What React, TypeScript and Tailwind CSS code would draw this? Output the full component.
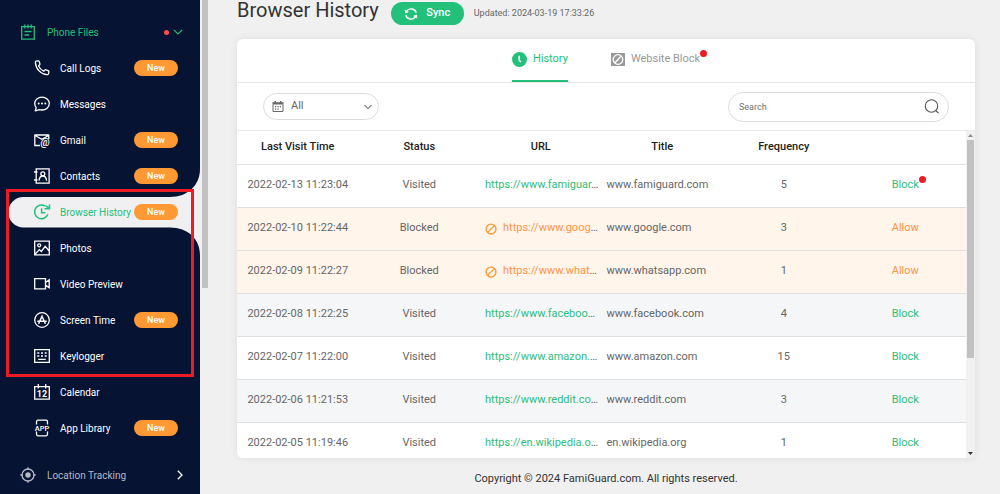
import type { ReactNode } from 'react'

type MenuItem = {
  label: string
  icon: ReactNode
  isNew?: boolean
  active?: boolean
}

function Icon({ children, className = 'w-4 h-4' }: { children: ReactNode; className?: string }) {
  return (
    <svg
      viewBox="0 0 16 16"
      fill="none"
      stroke="currentColor"
      strokeWidth="1.3"
      className={`shrink-0 overflow-visible ${className}`}
      aria-hidden="true"
    >
      {children}
    </svg>
  )
}

const topItems: MenuItem[] = [
  {
    label: 'Call Logs',
    isNew: true,
    icon: (
      <Icon>
        <path
          d="M1.4 2.6C1.2 1.6 2.2.8 3.3.8h.9c.6 0 1 .4 1.1.9l.6 2.2c.1.5 0 .9-.4 1.2l-1 .9c1 2.1 2.8 4 5.2 5.2l1-1.1c.3-.4.8-.5 1.2-.3l2.3.9c.5.2.8.6.7 1.1l-.2 1.4c-.1.9-.9 1.6-1.8 1.5C6.8 14.2 1.9 9 1.4 2.6z"
          strokeLinejoin="round"
        />
      </Icon>
    ),
  },
  {
    label: 'Messages',
    icon: (
      <Icon>
        <path d="M1.3 14.8l.9-3.2A6.3 6.3 0 0 1 .7 7.6C.7 4 4 1.2 8 1.2s7.3 2.8 7.3 6.4S12 14 8 14c-.9 0-1.7-.1-2.5-.4z" strokeLinejoin="round" />
        <g fill="currentColor" stroke="none">
          <circle cx="4.7" cy="7.6" r="1" />
          <circle cx="8" cy="7.6" r="1" />
          <circle cx="11.3" cy="7.6" r="1" />
        </g>
      </Icon>
    ),
  },
  {
    label: 'Gmail',
    isNew: true,
    icon: (
      <Icon>
        <path d="M6 13.500H.8V3.200h14V7M1 3.500l6.800 3.700 6.800-3.700M.8 3h14" />
        <text x="6.4" y="14" fill="currentColor" stroke="none" fontSize="10.5" fontStyle="italic" fontWeight="500" fontFamily="Roboto, sans-serif">@</text>
      </Icon>
    ),
  },
  {
    label: 'Contacts',
    isNew: true,
    icon: (
      <Icon>
        <path d="M2.2.9h12.9v14.2H2.2zM0 4h3.5M0 12h3.5" />
        <circle cx="8.8" cy="5.8" r="2" />
        <path d="M5 12.600c.3-2.800 1.600-4.600 3.800-4.600s3.500 1.800 3.800 4.600" />
      </Icon>
    ),
  },
]

const highlightedItems: MenuItem[] = [
  {
    label: 'Browser History',
    isNew: true,
    active: true,
    icon: (
      <Icon>
        <path d="M13.9 10.3A6.9 6.9 0 1 1 11 1.900M7.600 4.300v4.400h3.800" strokeWidth="1.5" />
        <path d="M10.5 4.800h5V.4M15.400 4.600l-3.900-3" strokeWidth="1.5" />
      </Icon>
    ),
  },
  {
    label: 'Photos',
    icon: (
      <Icon>
        <path d="M.7 1.200h14.600v13.600H.7zM1 14.400l4.300-4.800 2 1.900 3.900-5.200 4 4.700" />
        <circle cx="5.2" cy="5.3" r="1.5" />
      </Icon>
    ),
  },
  {
    label: 'Video Preview',
    icon: (
      <Icon>
        <path d="M.7 2.700h10.800v10.200H.7zM11.500 6.500l3.700-2.700v8l-3.700-2.700" />
      </Icon>
    ),
  },
  {
    label: 'Screen Time',
    isNew: true,
    icon: (
      <Icon>
        <circle cx="8" cy="8" r="7.3" />
        <path d="M4.600 11.800L8 4.300l3.400 7.500M3.300 9.300h9.400" strokeWidth="1.5" />
      </Icon>
    ),
  },
  {
    label: 'Keylogger',
    icon: (
      <Icon>
        <path d="M.7 1.700h14.600v12.600H.7zM4.200 11.400h7.600" />
        <path d="M3.300 5h2M7 5h2M10.700 5h2M3.300 8h2M7 8h2M10.700 8h2" strokeWidth="1.6" />
      </Icon>
    ),
  },
]

const bottomItems: MenuItem[] = [
  {
    label: 'Calendar',
    icon: (
      <Icon>
        <path d="M.7 2.700h14.600v12.500H.7zM4.300 0v4.500M11.700 0v4.500" />
        <text x="8" y="13.200" textAnchor="middle" fill="currentColor" stroke="none" fontSize="9" fontWeight="700" fontFamily="Roboto, sans-serif">12</text>
      </Icon>
    ),
  },
  {
    label: 'App Library',
    isNew: true,
    icon: (
      <Icon>
        <path d="M2.500 4.500V2C2.500 1.200 3 .2 3.800.2h8.400c.8 0 1.300 1 1.300 1.800v2.500M2.500 11.500V14c0 .8.5 1.800 1.300 1.800h8.400c.8 0 1.300-1 1.300-1.800v-2.500" />
        <text x="8" y="10.600" textAnchor="middle" fill="currentColor" stroke="none" fontSize="7.500" fontWeight="500" fontFamily="Roboto, sans-serif">APP</text>
      </Icon>
    ),
  },
]

function MenuRow({ item }: { item: MenuItem }) {
  return (
    <li className="relative h-9">
      {item.active && (
        <svg
          viewBox="0 0 192 86"
          className="absolute -top-[25px] right-0 w-[192px] h-[86px] text-[#f0f0f3]"
          fill="currentColor"
          aria-hidden="true"
        >
          <path d="M15.500 28H162C180 28 192 16 192 0V86C192 70 180 58.500 162 58.500H15.500A15.250 15.250 0 0 1 15.500 28z" />
        </svg>
      )}
      <a
        href="#"
        className={`relative flex items-center h-full pl-[34px] pr-[22px] ${item.active ? 'text-[#22c07a]' : 'text-white'}`}
      >
        {item.icon}
        <span className="ml-[10px] flex-1 whitespace-nowrap">{item.label}</span>
        {item.isNew && (
          <span className="w-11 h-4 rounded-full bg-[#ff9933] text-white text-[9px] leading-4 font-medium text-center">
            New
          </span>
        )}
      </a>
    </li>
  )
}

function Sidebar() {
  return (
    <nav className="w-[200px] shrink-0 bg-[#061333] pt-[14px] text-[10px] overflow-hidden">
      <button type="button" className="flex items-center w-full h-9 pl-5 pr-[17px] text-[#22c07a]">
        <Icon>
          <path d="M1.700 2.700h12.600v12.500H1.700zM4.800.4v4M8 .4v4M11.200.4v4M4.500 7.500h7M4.500 11h4.500" />
        </Icon>
        <span className="ml-[11px] flex-1 text-left">Phone Files</span>
        <span className="w-[5px] h-[5px] rounded-full bg-[#ff4d4f]" />
        <svg viewBox="0 0 10 6" className="ml-1 w-[10px] h-[6px]" fill="none" stroke="currentColor" strokeWidth="1.2" aria-hidden="true">
          <path d="M.8.8L5 5 9.200.8" />
        </svg>
      </button>
      <ul>
        {topItems.map((item) => (
          <MenuRow key={item.label} item={item} />
        ))}
      </ul>
      <div className="relative">
        <ul>
          {highlightedItems.map((item) => (
            <MenuRow key={item.label} item={item} />
          ))}
        </ul>
        <div className="absolute -top-[5px] -bottom-[3px] left-[6px] right-[6px] border-3 border-[#ed1c24] pointer-events-none" />
      </div>
      <ul>
        {bottomItems.map((item) => (
          <MenuRow key={item.label} item={item} />
        ))}
      </ul>
      <button type="button" className="flex items-center w-full h-9 mt-[11px] pl-5 pr-[17px] text-[#b4b9c5]">
        <Icon>
          <circle cx="8" cy="8" r="6" />
          <circle cx="8" cy="8" r="2.7" fill="currentColor" stroke="none" />
          <path d="M8 .3v2.500M8 13.200v2.500M.3 8h2.500M13.200 8h2.500" />
        </Icon>
        <span className="ml-[11px] flex-1 text-left">Location Tracking</span>
        <svg viewBox="0 0 6 10" className="w-[6px] h-[10px] text-white" fill="none" stroke="currentColor" strokeWidth="1.3" aria-hidden="true">
          <path d="M.8.8L5 5 .8 9.200" />
        </svg>
      </button>
    </nav>
  )
}

type Visit = {
  time: string
  url: string
  title: string
  frequency: number
  blocked?: boolean
  marked?: boolean
}

const visits: Visit[] = [
  { time: '2022-02-13 11:23:04', url: 'https://www.famiguar', title: 'www.famiguard.com', frequency: 5, marked: true },
  { time: '2022-02-10 11:22:44', url: 'https://www.goog', title: 'www.google.com', frequency: 3, blocked: true },
  { time: '2022-02-09 11:22:27', url: 'https://www.what', title: 'www.whatsapp.com', frequency: 1, blocked: true },
  { time: '2022-02-08 11:22:25', url: 'https://www.faceboo', title: 'www.facebook.com', frequency: 4 },
  { time: '2022-02-07 11:22:00', url: 'https://www.amazon.', title: 'www.amazon.com', frequency: 15 },
  { time: '2022-02-06 11:21:53', url: 'https://www.reddit.co', title: 'www.reddit.com', frequency: 3 },
  { time: '2022-02-05 11:19:46', url: 'https://en.wikipedia.o', title: 'en.wikipedia.org', frequency: 1 },
]

function rowColor(visit: Visit, index: number) {
  if (visit.blocked) return 'bg-[#fff5eb]'
  return index % 2 === 1 ? 'bg-[#f5f6f8]' : 'bg-white'
}

function HistoryTable() {
  return (
    <table className="w-full table-fixed border-collapse text-[11px] text-[#666]">
      <thead>
        <tr className="h-[33px] border-b border-[#e0e0e0] text-[#222]">
          <th className="font-medium">Last Visit Time</th>
          <th className="font-medium">Status</th>
          <th className="font-medium">URL</th>
          <th className="font-medium">Title</th>
          <th className="font-medium">Frequency</th>
          <th aria-label="Action" />
        </tr>
      </thead>
      <tbody>
        {visits.map((visit, i) => (
          <tr key={visit.time} className={`h-[43px] border-b border-[#e0e0e0] ${rowColor(visit, i)}`}>
            <td className="text-center whitespace-nowrap">{visit.time}</td>
            <td className="text-center">{visit.blocked ? 'Blocked' : 'Visited'}</td>
            <td className="pl-[5px]">
              <div className="flex items-center gap-[6px] whitespace-nowrap">
                {visit.blocked && (
                  <Icon className="w-3 h-3 text-[#ff9933]">
                    <circle cx="8" cy="8" r="6.6" strokeWidth="1.8" />
                    <path d="M3.500 12.500l9-9" strokeWidth="1.8" />
                  </Icon>
                )}
                <span>
                  <a href={`https://${visit.title}`} className={visit.blocked ? 'text-[#ff9345]' : 'text-[#2fbc7c]'}>
                    {visit.url}
                  </a>
                  …
                </span>
              </div>
            </td>
            <td className="pl-[5px]">{visit.title}</td>
            <td className="text-center">{visit.frequency}</td>
            <td className="text-center">
              <button type="button" className={`relative ${visit.blocked ? 'text-[#ff9345]' : 'text-[#2fbc7c]'}`}>
                {visit.blocked ? 'Allow' : 'Block'}
                {visit.marked && <span className="absolute -top-px -right-[7px] w-[7px] h-[7px] rounded-full bg-[#ed1c24]" />}
              </button>
            </td>
          </tr>
        ))}
      </tbody>
    </table>
  )
}

export default function App() {
  return (
    <div className="flex h-screen overflow-hidden bg-[#f0f0f0] font-[Roboto,sans-serif]">
      <Sidebar />
      <div className="w-2 shrink-0 pl-[2px]">
        <div className="h-[288px] bg-[#c1c1c1]" />
      </div>

      <main className="flex-1 min-w-0 flex flex-col pl-[29px] pr-[25px]">
        <header className="flex items-center h-[39px] pb-3">
          <h1 className="text-[20px] leading-5 text-[#333] -mt-2">Browser History</h1>
          <button
            type="button"
            className="flex items-center justify-center gap-2 w-[73px] h-[23px] ml-3 rounded-full bg-[#22c07a] text-white text-[11px] font-medium"
          >
            <Icon className="w-[14px] h-[14px]">
              <path d="M3 4.800A6.200 6.200 0 0 1 14 6.500M13 11.200A6.200 6.200 0 0 1 2 9.500" strokeWidth="1.6" />
              <path d="M.8 2.800l.6 4.600L5.600 5.700zM15.200 13.200l-.6-4.600-4.200 1.700z" fill="currentColor" stroke="none" />
            </Icon>
            Sync
          </button>
          <p className="ml-[10px] text-[9px] text-[#666]">Updated: 2024-03-19 17:33:26</p>
        </header>

        <section className="flex-1 min-h-0 flex flex-col rounded-md bg-white overflow-hidden shadow-[0_0_8px_rgba(0,0,0,0.08)]">
          <div className="flex justify-center gap-[43px] h-11 shrink-0 border-b border-[#e6e6e6] text-[11px]">
            <button type="button" className="flex items-center gap-[6px] border-b-2 border-[#22c07a] text-[#22c07a]">
              <svg viewBox="0 0 16 16" className="w-[15px] h-[15px]" aria-hidden="true">
                <circle cx="8" cy="8" r="8" fill="#22c07a" />
                <path d="M7.600 4v4.700l2 2" fill="none" stroke="#fff" strokeWidth="1.6" />
              </svg>
              History
            </button>
            <button type="button" className="flex items-center gap-[6px] border-b-2 border-transparent text-[#999]">
              <svg viewBox="0 0 14 13" className="w-[14px] h-[13px]" fill="none" stroke="#fff" strokeWidth="1.3" aria-hidden="true">
                <path d="M0 0h14v13H0z" fill="#999" stroke="none" />
                <circle cx="7" cy="6.5" r="4.8" />
                <path d="M4 9.800l6-6.600" />
              </svg>
              <span className="relative">
                Website Block
                <span className="absolute -top-px -right-[7px] w-[7px] h-[7px] rounded-full bg-[#ed1c24]" />
              </span>
            </button>
          </div>

          <div className="flex items-center justify-between h-12 shrink-0 px-[26px] border-b border-[#e6e9ee]">
            <div className="relative flex items-center text-[#666]">
              <svg viewBox="0 0 12 12" className="absolute left-[9px] w-3 h-3" fill="#666" aria-hidden="true">
                <path d="M2.500 0h1.500v1.200h4V0h1.500v1.200H11.500V3.500H.5V1.200h2z" />
                <path d="M1 3.500v7h10v-7" fill="none" stroke="#666" />
                <path d="M3 5h1.300v1.300H3zM5.400 5h1.300v1.300H5.400zM7.800 5h1.300v1.300H7.800zM3 7.500h1.300v1.300H3zM5.400 7.500h1.300v1.300H5.400z" />
              </svg>
              <select
                aria-label="Date range"
                className="appearance-none w-[116px] h-[27px] pl-[27px] rounded-full border border-[#dcdcdc] bg-transparent text-[11px]"
              >
                <option>All</option>
              </select>
              <svg viewBox="0 0 8 6" className="absolute right-[7px] w-2 h-[6px]" fill="none" stroke="#888" strokeWidth="1.2" aria-hidden="true">
                <path d="M.5 1L4 4.600 7.500 1" />
              </svg>
            </div>
            <div className="relative flex items-center">
              <input
                type="text"
                aria-label="Search"
                placeholder="Search"
                className="w-[221px] h-[30px] pl-[10px] pr-8 rounded-full border border-[#dcdcdc] text-[9px] text-[#666] placeholder:text-[#757575]"
              />
              <button type="button" aria-label="Search" className="absolute right-[9px] text-[#555]">
                <Icon className="w-4 h-4">
                  <circle cx="7.5" cy="7" r="6.2" strokeWidth="1.1" />
                  <path d="M11.800 11.500l2.700 2.700" strokeWidth="1.2" />
                </Icon>
              </button>
            </div>
          </div>

          <div className="flex flex-1 min-h-0">
            <div className="flex-1 min-w-0 overflow-hidden">
              <HistoryTable />
            </div>
            <div className="w-[9px] shrink-0 flex flex-col items-center justify-between bg-[#f1f1f1] py-[3px]">
              <svg viewBox="0 0 5 3" className="w-[5px] h-[3px] shrink-0" fill="#888" aria-hidden="true">
                <path d="M0 3h5L2.500 0z" />
              </svg>
              <div className="w-full flex-1 px-px pt-[3px]">
                <div className="h-[70%] bg-[#c1c1c1]" />
              </div>
              <svg viewBox="0 0 5 3" className="w-[5px] h-[3px] shrink-0" fill="#333" aria-hidden="true">
                <path d="M0 0h5L2.500 3z" />
              </svg>
            </div>
          </div>
        </section>

        <footer className="h-9 shrink-0 pt-[13px] text-[11px] leading-4 text-[#333] text-center">
          Copyright © 2024 FamiGuard.com. All rights reserved.
        </footer>
      </main>
    </div>
  )
}
